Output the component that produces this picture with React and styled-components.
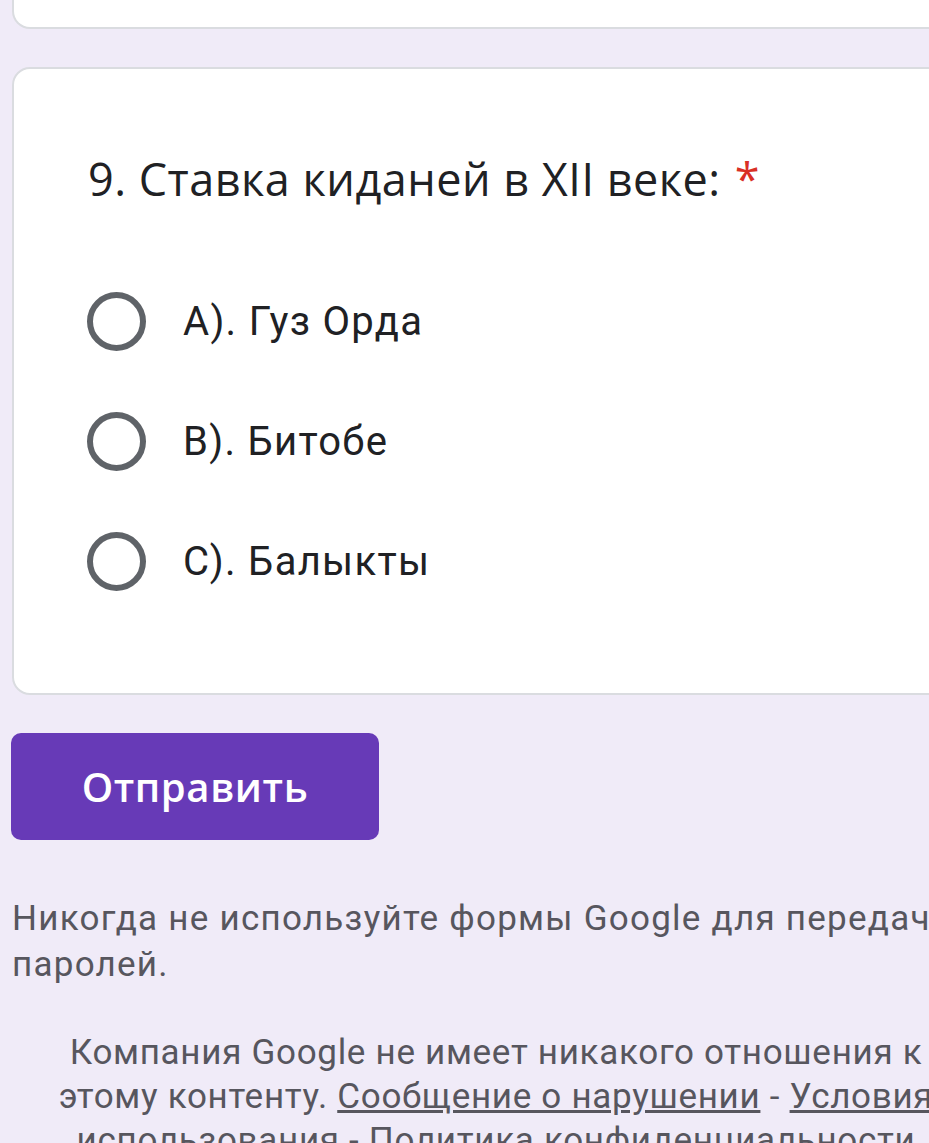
import React from "react";
import styled, { createGlobalStyle } from "styled-components";

const GlobalStyle = createGlobalStyle`
  html, body {
    margin: 0;
    padding: 0;
    background: #f0ebf8;
    overflow: hidden;
  }
`;

// вся страница шире окна, справа обрезана
const Page = styled.div`
  width: 968px;
  padding-left: 12px;
  display: flex;
  flex-direction: column;
`;

const TopCard = styled.div`
  height: 27px;
  background: #fff;
  border: 2px solid #dadce0;
  border-top: none;
  border-radius: 0 0 18px 18px;
`;

const QuestionCard = styled.div`
  margin-top: 38px;
  background: #fff;
  border: 2px solid #dadce0;
  border-radius: 18px;
  padding: 80px 0 72px 73px;
`;

const Title = styled.div`
  font-family: "Open Sans", "Liberation Sans", sans-serif;
  font-size: 45px;
  line-height: 60px;
  color: #202124;
  letter-spacing: 0.5px;
  padding-left: 1px;
`;

const Required = styled.span`
  color: #d93025;
  margin-left: 14px;
`;

const Options = styled.div`
  margin-top: 52px;
  display: flex;
  flex-direction: column;
`;

const Option = styled.label`
  display: flex;
  align-items: center;
  height: 120px;
  gap: 37px;
  font-family: Roboto, "Liberation Sans", sans-serif;
  font-size: 40px;
  letter-spacing: 1.3px;
  color: #202124;
`;

const Radio = styled.span`
  width: 47px;
  height: 47px;
  border: 6px solid #5f6368;
  border-radius: 50%;
  flex-shrink: 0;
`;

const SubmitButton = styled.button`
  margin-top: 38px;
  margin-left: -1px;
  width: 368px;
  height: 107px;
  border: none;
  border-radius: 10px;
  background: #673ab7;
  color: #fff;
  font-family: "Open Sans", "Liberation Sans", sans-serif;
  font-weight: 600;
  font-size: 40px;
  letter-spacing: 0.6px;
  text-align: center;
  cursor: pointer;
`;

const Warning = styled.p`
  margin: 56px 0 0;
  font-family: Roboto, "Liberation Sans", sans-serif;
  font-size: 35px;
  line-height: 46px;
  letter-spacing: 1.25px;
  color: #57565e;
`;

const Disclaimer = styled.p`
  margin: 43px 0 0;
  padding: 0 40px;
  text-align: center;
  font-family: Roboto, "Liberation Sans", sans-serif;
  font-size: 35px;
  line-height: 44px;
  letter-spacing: 0.7px;
  color: #57565e;
`;

const Link = styled.a`
  color: #57565e;
  text-decoration: underline;
`;

const options = ["А). Гуз Орда", "В). Битобе", "С). Балыкты"];

const App = () => {
  return (
    <>
      <GlobalStyle />
      <Page>
        <TopCard />
        <QuestionCard>
          <Title>
            9. Ставка киданей в XII веке:<Required>*</Required>
          </Title>
          <Options>
            {options.map((text) => (
              <Option key={text}>
                <Radio />
                {text}
              </Option>
            ))}
          </Options>
        </QuestionCard>
        <div>
          <SubmitButton>Отправить</SubmitButton>
        </div>
        <Warning>
          Никогда не используйте формы Google для передачи паролей.
        </Warning>
        <Disclaimer>
          Компания Google не имеет никакого отношения к этому контенту.{" "}
          <Link>Сообщение о нарушении</Link> - <Link>Условия использования</Link>{" "}
          - <Link>Политика конфиденциальности</Link>
        </Disclaimer>
      </Page>
    </>
  );
};

export default App;
